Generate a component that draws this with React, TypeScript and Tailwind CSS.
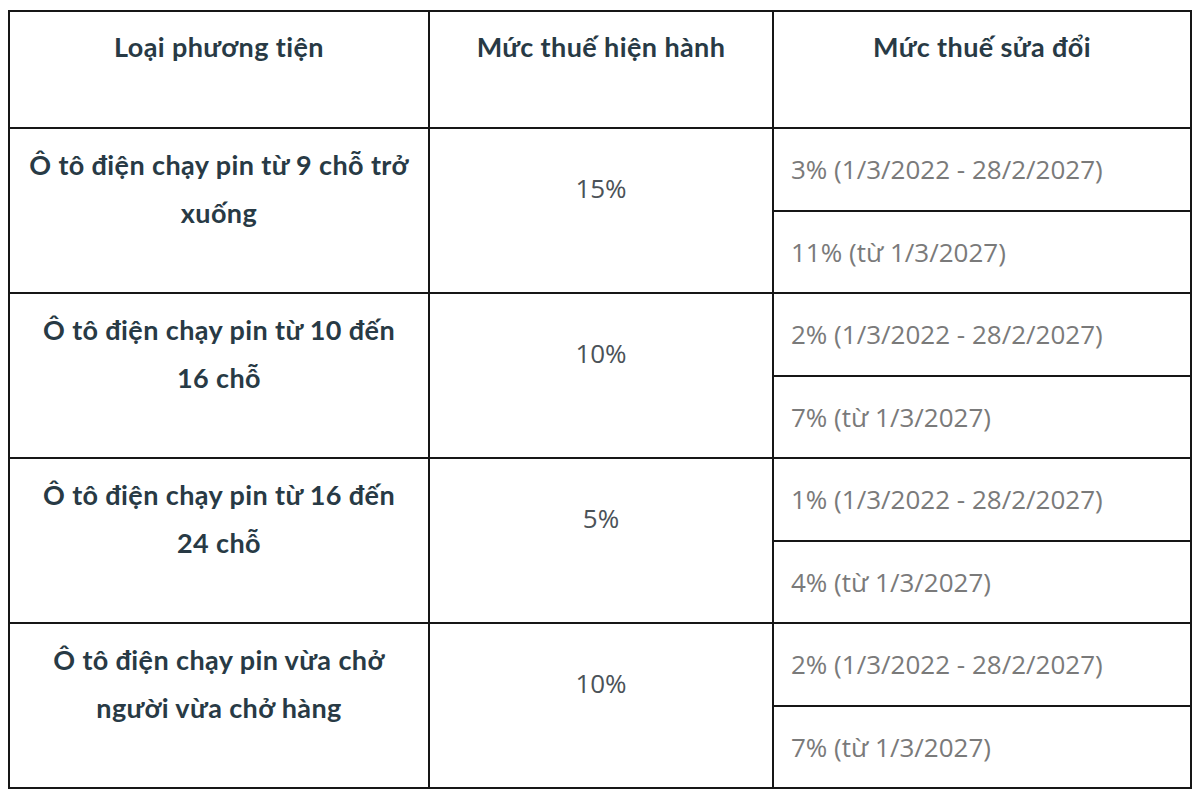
const rows = [
  {
    name: ['Ô tô điện chạy pin từ 9 chỗ trở', 'xuống'],
    current: '15%',
    revised: ['3% (1/3/2022 - 28/2/2027)', '11% (từ 1/3/2027)'],
  },
  {
    name: ['Ô tô điện chạy pin từ 10 đến', '16 chỗ'],
    current: '10%',
    revised: ['2% (1/3/2022 - 28/2/2027)', '7% (từ 1/3/2027)'],
  },
  {
    name: ['Ô tô điện chạy pin từ 16 đến', '24 chỗ'],
    current: '5%',
    revised: ['1% (1/3/2022 - 28/2/2027)', '4% (từ 1/3/2027)'],
  },
  {
    name: ['Ô tô điện chạy pin vừa chở', 'người vừa chở hàng'],
    current: '10%',
    revised: ['2% (1/3/2022 - 28/2/2027)', '7% (từ 1/3/2027)'],
  },
];

const headFont = "font-['Lato','Noto_Sans',sans-serif] font-bold text-[27px] tracking-[0.4px] leading-[48px] text-[#283a45]";
const bodyFont = "font-['Open_Sans','Noto_Sans',sans-serif] text-[26px] leading-[48px]";

export default function App() {
  return (
    <div className="w-[1200px] h-[800px] bg-white pt-[10px] pl-[8px]">
      <div className="w-[1184px] border-2 border-[#161616]">
        <div className="grid grid-cols-[420px_344px_1fr] h-[115px]">
          <div className={`border-r-2 border-[#161616] pt-[11px] text-center ${headFont}`}>Loại phương tiện</div>
          <div className={`border-r-2 border-[#161616] pt-[11px] text-center ${headFont}`}>Mức thuế hiện hành</div>
          <div className={`pt-[11px] text-center ${headFont}`}>Mức thuế sửa đổi</div>
        </div>
        {rows.map((r, i) => (
          <div key={i} className="grid grid-cols-[420px_344px_1fr] h-[165px] border-t-2 border-[#161616]">
            <div className={`border-r-2 border-[#161616] pt-[12px] text-center ${headFont}`}>
              {r.name.map((l) => (
                <div key={l}>{l}</div>
              ))}
            </div>
            <div className={`border-r-2 border-[#161616] pt-[35px] text-center text-[#4b5258] ${bodyFont}`}>{r.current}</div>
            <div className="flex flex-col">
              <div className={`flex-1 flex items-center pl-[17px] text-[#7a7a7a] ${bodyFont}`}>{r.revised[0]}</div>
              <div className={`flex-1 flex items-center pl-[17px] border-t-2 border-[#161616] text-[#7a7a7a] ${bodyFont}`}>{r.revised[1]}</div>
            </div>
          </div>
        ))}
      </div>
    </div>
  );
}
